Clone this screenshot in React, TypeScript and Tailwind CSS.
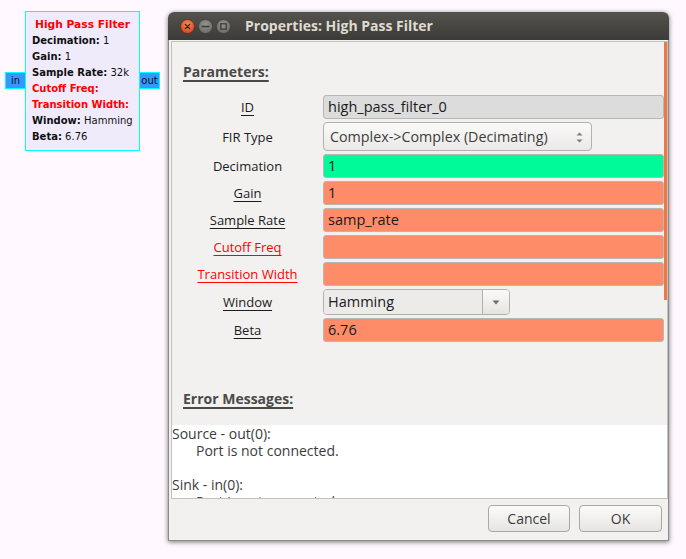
import React from "react";

const UI = '"Open Sans", "Noto Sans", "DejaVu Sans", sans-serif';
const DV = '"DejaVu Sans", "Liberation Sans", sans-serif';

function Label({ text, red, u }: { text: string; red?: boolean; u?: boolean }) {
  return (
    <div className="flex justify-center">
      <span
        className={
          (red ? "text-[#ff0000] decoration-[#ff0000] " : "text-[#1c1c1c] decoration-[#1c1c1c] ") +
          (u ? "underline underline-offset-[3px] decoration-1 " : "") +
          "text-[13px] leading-[18px]"
        }
      >
        {text}
      </span>
    </div>
  );
}

function Entry({ value, bg }: { value: string; bg: string }) {
  return (
    <div
      className={
        "h-[24px] flex items-center pl-[4px] rounded-[3px] border border-[#b9b7b3] text-[14.5px] text-[#1a1a1a] leading-[18px] " +
        bg
      }
    >
      {value}
    </div>
  );
}

function Row({ children }: { children: React.ReactNode }) {
  return <div className="grid grid-cols-[151px_1fr] items-center">{children}</div>;
}

export default function App() {
  return (
    <div
      className="relative w-[686px] h-[559px] bg-[#fff9ff] overflow-hidden"
      style={{ fontFamily: UI }}
    >
      {/* Flowgraph block */}
      <div
        className="absolute left-[5px] top-[72px] w-[21px] h-[17px] bg-[#3399ff] border border-[#00ffff] flex items-center justify-center text-[10px] text-[#101010] leading-none"
        style={{ fontFamily: DV }}
      >
        in
      </div>
      <div
        className="absolute left-[139px] top-[72px] w-[21px] h-[17px] bg-[#3399ff] border border-[#00ffff] flex items-center justify-center text-[10px] text-[#101010] leading-none"
        style={{ fontFamily: DV }}
      >
        out
      </div>
      <div
        className="absolute left-[25px] top-[11px] w-[115px] h-[140px] border border-[#00ffff] bg-[#efebfb] pl-[6px] pt-[5px] text-[10px] leading-[16px] text-[#111]"
        style={{ fontFamily: DV }}
      >
        <div className="text-center pr-[6px] font-bold text-[#ff0000] text-[10.7px]">High Pass Filter</div>
        <div>
          <b>Decimation:</b> 1
        </div>
        <div>
          <b>Gain:</b> 1
        </div>
        <div>
          <b>Sample Rate:</b> 32k
        </div>
        <div className="font-bold text-[#ff0000]">Cutoff Freq:</div>
        <div className="font-bold text-[#ff0000]">Transition Width:</div>
        <div>
          <b>Window:</b> Hamming
        </div>
        <div>
          <b>Beta:</b> 6.76
        </div>
      </div>

      {/* Dialog window */}
      <div className="absolute left-[168px] top-[12px] w-[501px] h-[529px] flex flex-col rounded-t-[6px] shadow-[0_1px_5px_rgba(0,0,0,0.55)]">
        {/* Title bar */}
        <div className="h-[28px] shrink-0 rounded-t-[6px] bg-gradient-to-b from-[#55534e] to-[#3c3b37] flex items-center pl-[12px]">
          <div className="flex items-center gap-[3px]">
            <svg width="15" height="15" viewBox="0 0 15 15">
              <defs>
                <radialGradient id="cl" cx="50%" cy="35%" r="65%">
                  <stop offset="0%" stopColor="#f58a5a" />
                  <stop offset="100%" stopColor="#d8461a" />
                </radialGradient>
              </defs>
              <circle cx="7.5" cy="7.5" r="7" fill="url(#cl)" stroke="#3a2a22" strokeWidth="0.6" />
              <path d="M5.3 5.3 L9.7 9.7 M9.7 5.3 L5.3 9.7" stroke="#3b1a0c" strokeWidth="1.2" strokeLinecap="round" />
            </svg>
            <svg width="15" height="15" viewBox="0 0 15 15">
              <defs>
                <radialGradient id="gr" cx="50%" cy="35%" r="65%">
                  <stop offset="0%" stopColor="#95938e" />
                  <stop offset="100%" stopColor="#6c6a66" />
                </radialGradient>
              </defs>
              <circle cx="7.5" cy="7.5" r="7" fill="url(#gr)" stroke="#363531" strokeWidth="0.6" />
              <path d="M4.3 7.5 L10.7 7.5" stroke="#3a3935" strokeWidth="1.6" strokeLinecap="round" />
            </svg>
            <svg width="15" height="15" viewBox="0 0 15 15">
              <circle cx="7.5" cy="7.5" r="7" fill="url(#gr)" stroke="#363531" strokeWidth="0.6" />
              <rect x="4.8" y="4.8" width="5.4" height="5.4" fill="none" stroke="#3a3935" strokeWidth="1.2" />
            </svg>
          </div>
          <span className="ml-[14px] text-[14px] font-bold text-[#dfdbd2] leading-[20px]">
            Properties: High Pass Filter
          </span>
        </div>

        {/* Body */}
        <div className="flex-1 flex flex-col bg-[#f2f1f0] border-x border-b border-[#8d8b87] pl-[2px] pt-[1px]">
          <div className="h-[458px] shrink-0 flex flex-col border border-[#c4c2bf]">
            {/* Scrolled parameters */}
            <div className="h-[383px] shrink-0 flex">
              <div className="flex-1 flex flex-col">
                <div className="h-[53px] shrink-0 pl-[11px] pt-[17px]">
                  <span className="text-[14px] leading-[20px] font-bold text-[#4a4a48] underline decoration-2 underline-offset-[3px]">
                    Parameters:
                  </span>
                </div>
                <div className="flex flex-col gap-[3px]">
                  <Row>
                    <Label text="ID" u />
                    <Entry value="high_pass_filter_0" bg="bg-[#dcdcdc]" />
                  </Row>
                  <Row>
                    <Label text="FIR Type" />
                    <div className="h-[29px] w-[269px] relative flex items-center pl-[6px] rounded-[4px] border border-[#b3b1ae] bg-gradient-to-b from-[#fafaf9] to-[#ebe9e7] text-[14.3px] text-[#3c3c3c]">
                      Complex-&gt;Complex (Decimating)
                      <svg className="absolute right-[8px] top-[9px]" width="7" height="11" viewBox="0 0 7 11">
                        <path d="M0.5 3.5 L3.5 0.5 L6.5 3.5 Z" fill="#7c7b78" />
                        <path d="M0.5 7.5 L3.5 10.5 L6.5 7.5 Z" fill="#7c7b78" />
                      </svg>
                    </div>
                  </Row>
                  <Row>
                    <Label text="Decimation" />
                    <Entry value="1" bg="bg-[#00fa99]" />
                  </Row>
                  <Row>
                    <Label text="Gain" u />
                    <Entry value="1" bg="bg-[#ff8c69]" />
                  </Row>
                  <Row>
                    <Label text="Sample Rate" u />
                    <Entry value="samp_rate" bg="bg-[#ff8c69]" />
                  </Row>
                  <Row>
                    <Label text="Cutoff Freq" u red />
                    <Entry value="" bg="bg-[#ff8c69]" />
                  </Row>
                  <Row>
                    <Label text="Transition Width" u red />
                    <Entry value="" bg="bg-[#ff8c69]" />
                  </Row>
                  <Row>
                    <Label text="Window" u />
                    <div className="h-[26px] w-[187px] flex rounded-[4px] border border-[#b3b1ae] overflow-hidden">
                      <div className="flex-1 flex items-center pl-[4px] bg-[#ecebea] text-[14.5px] text-[#1a1a1a] border-r border-[#b3b1ae]">
                        Hamming
                      </div>
                      <div className="w-[26px] flex items-center justify-center bg-gradient-to-b from-[#fafaf9] to-[#e6e4e2]">
                        <svg width="8" height="5" viewBox="0 0 8 5">
                          <path d="M0.5 0.5 L7.5 0.5 L4 4.5 Z" fill="#6e6d6a" />
                        </svg>
                      </div>
                    </div>
                  </Row>
                  <Row>
                    <Label text="Beta" u />
                    <Entry value="6.76" bg="bg-[#ff8c69]" />
                  </Row>
                </div>
                <div className="mt-auto pl-[11px] pb-[15px]">
                  <span className="text-[14px] leading-[20px] font-bold text-[#4a4a48] underline decoration-2 underline-offset-[3px]">
                    Error Messages:
                  </span>
                </div>
              </div>
              <div className="w-[3px] shrink-0 flex flex-col">
                <div className="h-[258px] bg-[#ef7845]" />
              </div>
            </div>
            {/* Error text view */}
            <div className="flex-1 bg-white overflow-hidden text-[14px] leading-[17px] text-[#3c3c3c]">
              <div>Source - out(0):</div>
              <div className="pl-[24px]">Port is not connected.</div>
              <div className="h-[17px]" />
              <div>Sink - in(0):</div>
              <div className="pl-[24px]">Port is not connected.</div>
            </div>
          </div>
          {/* Buttons */}
          <div className="flex justify-end gap-[9px] pt-[6px] pr-[6px]">
            <div className="w-[82px] h-[27px] flex items-center justify-center rounded-[4px] border border-[#aaa8a4] bg-gradient-to-b from-[#fbfbfa] to-[#e7e5e3] text-[14px] text-[#3c3c3c]">
              Cancel
            </div>
            <div className="w-[83px] h-[27px] flex items-center justify-center rounded-[4px] border border-[#aaa8a4] bg-gradient-to-b from-[#fbfbfa] to-[#e7e5e3] text-[14px] text-[#3c3c3c]">
              OK
            </div>
          </div>
        </div>
      </div>
    </div>
  );
}
